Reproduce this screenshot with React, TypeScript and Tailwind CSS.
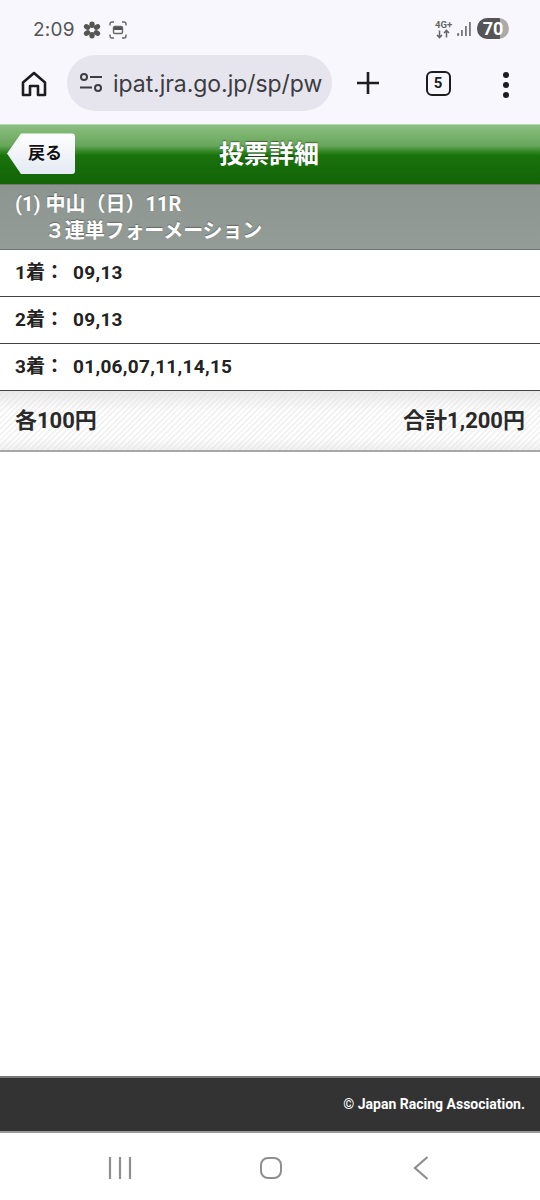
import React from "react";

const jp = "font-['Roboto','Noto_Sans_CJK_JP',sans-serif]";

function Row({ label, value }: { label: string; value: string }) {
  return (
    <div className="flex h-[47px] items-center border-b border-[#444] bg-white pl-[15px] text-[19px] font-bold text-[#222]">
      <span className="w-[58px] whitespace-nowrap">{label}</span>
      <span className="tracking-[0.3px]">{value}</span>
    </div>
  );
}

export default function App() {
  return (
    <div className={`${jp} flex h-[1200px] w-[540px] flex-col overflow-hidden bg-white`}>
      {/* Status bar */}
      <div className="flex h-[55px] shrink-0 items-start justify-between bg-[#f8f7fe] pl-[33px] pr-[31px] pt-[18px]">
        <div className="flex items-center gap-[8px] text-[#555]">
          <span className="font-['Inter',sans-serif] text-[19px] leading-[24px] tracking-[0.2px]">2:09</span>
          <svg width="18" height="18" viewBox="0 0 18 18" fill="#555">
            <ellipse cx="9" cy="3.8" rx="2.7" ry="3.3" />
            <ellipse cx="9" cy="14.2" rx="2.7" ry="3.3" />
            <ellipse cx="4" cy="6" rx="3.3" ry="2.6" transform="rotate(30 4 6)" />
            <ellipse cx="14" cy="6" rx="3.3" ry="2.6" transform="rotate(-30 14 6)" />
            <ellipse cx="4" cy="12" rx="3.3" ry="2.6" transform="rotate(-30 4 12)" />
            <ellipse cx="14" cy="12" rx="3.3" ry="2.6" transform="rotate(30 14 12)" />
            <circle cx="9" cy="9" r="1.1" fill="#f8f7fe" />
          </svg>
          <svg width="18" height="18" viewBox="0 0 18 18" fill="none" stroke="#666" strokeWidth="1.4">
            <path d="M1 4.5V3a2 2 0 0 1 2-2h2M13 1h2a2 2 0 0 1 2 2v1.5M17 13.5V15a2 2 0 0 1-2 2h-2M5 17H3a2 2 0 0 1-2-2v-1.5" />
            <rect x="4.5" y="5.5" width="9" height="7" rx="1.3" />
            <rect x="5" y="6" width="8" height="3" fill="#555" stroke="none" />
          </svg>
        </div>
        <div className="flex items-center gap-[5px]">
          <svg width="16" height="20" viewBox="0 0 16 20" fill="#666" overflow="visible">
            <text x="0" y="9" fontSize="9.5" fontWeight="700" fontFamily="Roboto, sans-serif">4G+</text>
            <path d="M4.5 11.5v7M2 16l2.5 2.6L7 16M11.5 18.5v-7M9 14l2.5-2.6L14 14" stroke="#666" strokeWidth="1.5" fill="none" />
          </svg>
          <svg width="16" height="16" viewBox="0 0 16 16" fill="#777">
            <rect x="1" y="12" width="2.2" height="3" rx="1" />
            <rect x="5" y="9" width="1.8" height="6" />
            <rect x="9" y="5" width="1.8" height="10" />
            <rect x="13" y="1" width="1.8" height="14" />
          </svg>
          <div className="relative flex h-[21px] w-[32px] items-center justify-center overflow-hidden rounded-full bg-[#aaa] text-[18px] font-bold leading-none text-white">
            <div className="absolute inset-y-0 left-0 w-[23px] bg-[#555]" />
            <span className="relative">70</span>
          </div>
        </div>
      </div>

      {/* Browser toolbar */}
      <div className="flex h-[69px] shrink-0 items-start bg-[#f8f7fe]">
        <div className="flex w-[67px] justify-center pt-[16px]">
          <svg width="26" height="26" viewBox="0 0 26 26" fill="none" stroke="#1d1d20" strokeWidth="2.6" strokeLinejoin="round">
            <path d="M2 11.5 13 2l11 9.5V24h-7v-9H9v9H2z" />
          </svg>
        </div>
        <div className="flex h-[56px] w-[265px] items-center rounded-full bg-[#e6e5ed] pl-[12px] text-[#3c3c42]">
          <svg width="24" height="22" viewBox="0 0 24 22" fill="none" stroke="#3c3c42" strokeWidth="2">
            <circle cx="5" cy="5" r="3" />
            <path d="M11 5h12M1 15.5h12" />
            <circle cx="19" cy="16" r="3" />
          </svg>
          <span className="ml-[10px] whitespace-nowrap pt-[2px] font-['Inter',sans-serif] text-[23px] tracking-[-0.05px]">ipat.jra.go.jp/sp/pw</span>
        </div>
        <div className="flex w-[72px] justify-center pt-[16px]">
          <svg width="24" height="24" viewBox="0 0 24 24" stroke="#1d1d20" strokeWidth="2.6">
            <path d="M12 1v22M1 12h22" />
          </svg>
        </div>
        <div className="flex w-[68px] justify-center pt-[16px]">
          <div className="flex h-[25px] w-[25px] items-center justify-center rounded-[6px] border-[2.6px] border-[#1d1d20] text-[15px] font-bold text-[#1d1d20]">
            5
          </div>
        </div>
        <div className="flex w-[68px] flex-col items-center gap-[4px] pt-[17px]">
          <span className="h-[6px] w-[6px] rounded-full bg-[#1d1d20]" />
          <span className="h-[6px] w-[6px] rounded-full bg-[#1d1d20]" />
          <span className="h-[6px] w-[6px] rounded-full bg-[#1d1d20]" />
        </div>
      </div>

      {/* Green header */}
      <div className="relative flex h-[60px] shrink-0 items-center justify-center border-t border-[#b5d8ae] bg-[linear-gradient(#8cbf80_0%,#68a65b_35%,#2f8420_46%,#1a720c_52%,#126407_100%)]">
        <button className="absolute left-[7px] top-[8px] flex h-[41px] w-[68px] items-center justify-center pl-[8px] text-[17px] font-bold text-[#111]">
          <svg className="absolute inset-0" width="68" height="41" viewBox="0 0 68 41">
            <defs>
              <linearGradient id="backGrad" x1="0" y1="0" x2="0" y2="1">
                <stop offset="0" stopColor="#ffffff" />
                <stop offset="1" stopColor="#e4e9f3" />
              </linearGradient>
            </defs>
            <path d="M0 20.5 14 0.5H65a3 3 0 0 1 3 3V38a3 3 0 0 1-3 3H14z" fill="url(#backGrad)" />
          </svg>
          <span className="relative">戻る</span>
        </button>
        <h1 className="pr-[2px] text-[25px] font-bold text-white [text-shadow:0_-1px_1px_rgba(0,0,0,0.4)]">投票詳細</h1>
      </div>

      {/* Gray race band */}
      <div className="h-[66px] shrink-0 border-y border-[#6f7772] bg-[linear-gradient(#8c9590,#949c97)] pl-[15px] pt-[6px] text-[20px] font-bold leading-[27px] text-white [text-shadow:0_-1px_1px_rgba(0,0,0,0.3)]">
        <div>(1) 中山（日）11R</div>
        <div className="pl-[30px] tracking-[-0.15px]">３連単フォーメーション</div>
      </div>

      <Row label="1着：" value="09,13" />
      <Row label="2着：" value="09,13" />
      <Row label="3着：" value="01,06,07,11,14,15" />

      {/* Totals */}
      <div className="flex h-[61px] shrink-0 items-center justify-between border-b-2 border-[#a8a8a8] bg-[linear-gradient(rgba(225,225,225,0.7),rgba(255,255,255,0)_35%,rgba(255,255,255,0)_80%,rgba(225,225,225,0.5)),repeating-linear-gradient(135deg,#ffffff_0px,#ffffff_2px,#f3f3f3_2px,#f3f3f3_4px)] px-[15px] text-[22px] font-bold text-[#2a2a2a]">
        <span>各100円</span>
        <span>合計1,200円</span>
      </div>

      <div className="flex-1" />

      {/* Footer */}
      <div className="flex h-[57px] shrink-0 items-center justify-end border-y-2 border-t-[#777] border-b-[#999] bg-[#333] pr-[15px] text-[14px] font-bold text-white">
        © Japan Racing Association.
      </div>

      {/* Android nav */}
      <div className="flex h-[67px] shrink-0 items-center bg-white">
        <div className="flex w-[240px] justify-center pt-[2px]">
          <svg width="24" height="24" viewBox="0 0 24 24" stroke="#8e8e8e" strokeWidth="2.2">
            <path d="M2 1v22M12 1v22M22 1v22" />
          </svg>
        </div>
        <div className="flex w-[62px] justify-center pl-[1px] pt-[2px]">
          <div className="h-[22px] w-[22px] rounded-[8px] border-[2.2px] border-[#8e8e8e]" />
        </div>
        <div className="flex w-[240px] justify-center pl-[2px] pt-[2px]">
          <svg width="16" height="24" viewBox="0 0 16 24" fill="none" stroke="#8e8e8e" strokeWidth="2.2">
            <path d="M14.5 1 2 12l12.5 11" />
          </svg>
        </div>
      </div>
    </div>
  );
}
